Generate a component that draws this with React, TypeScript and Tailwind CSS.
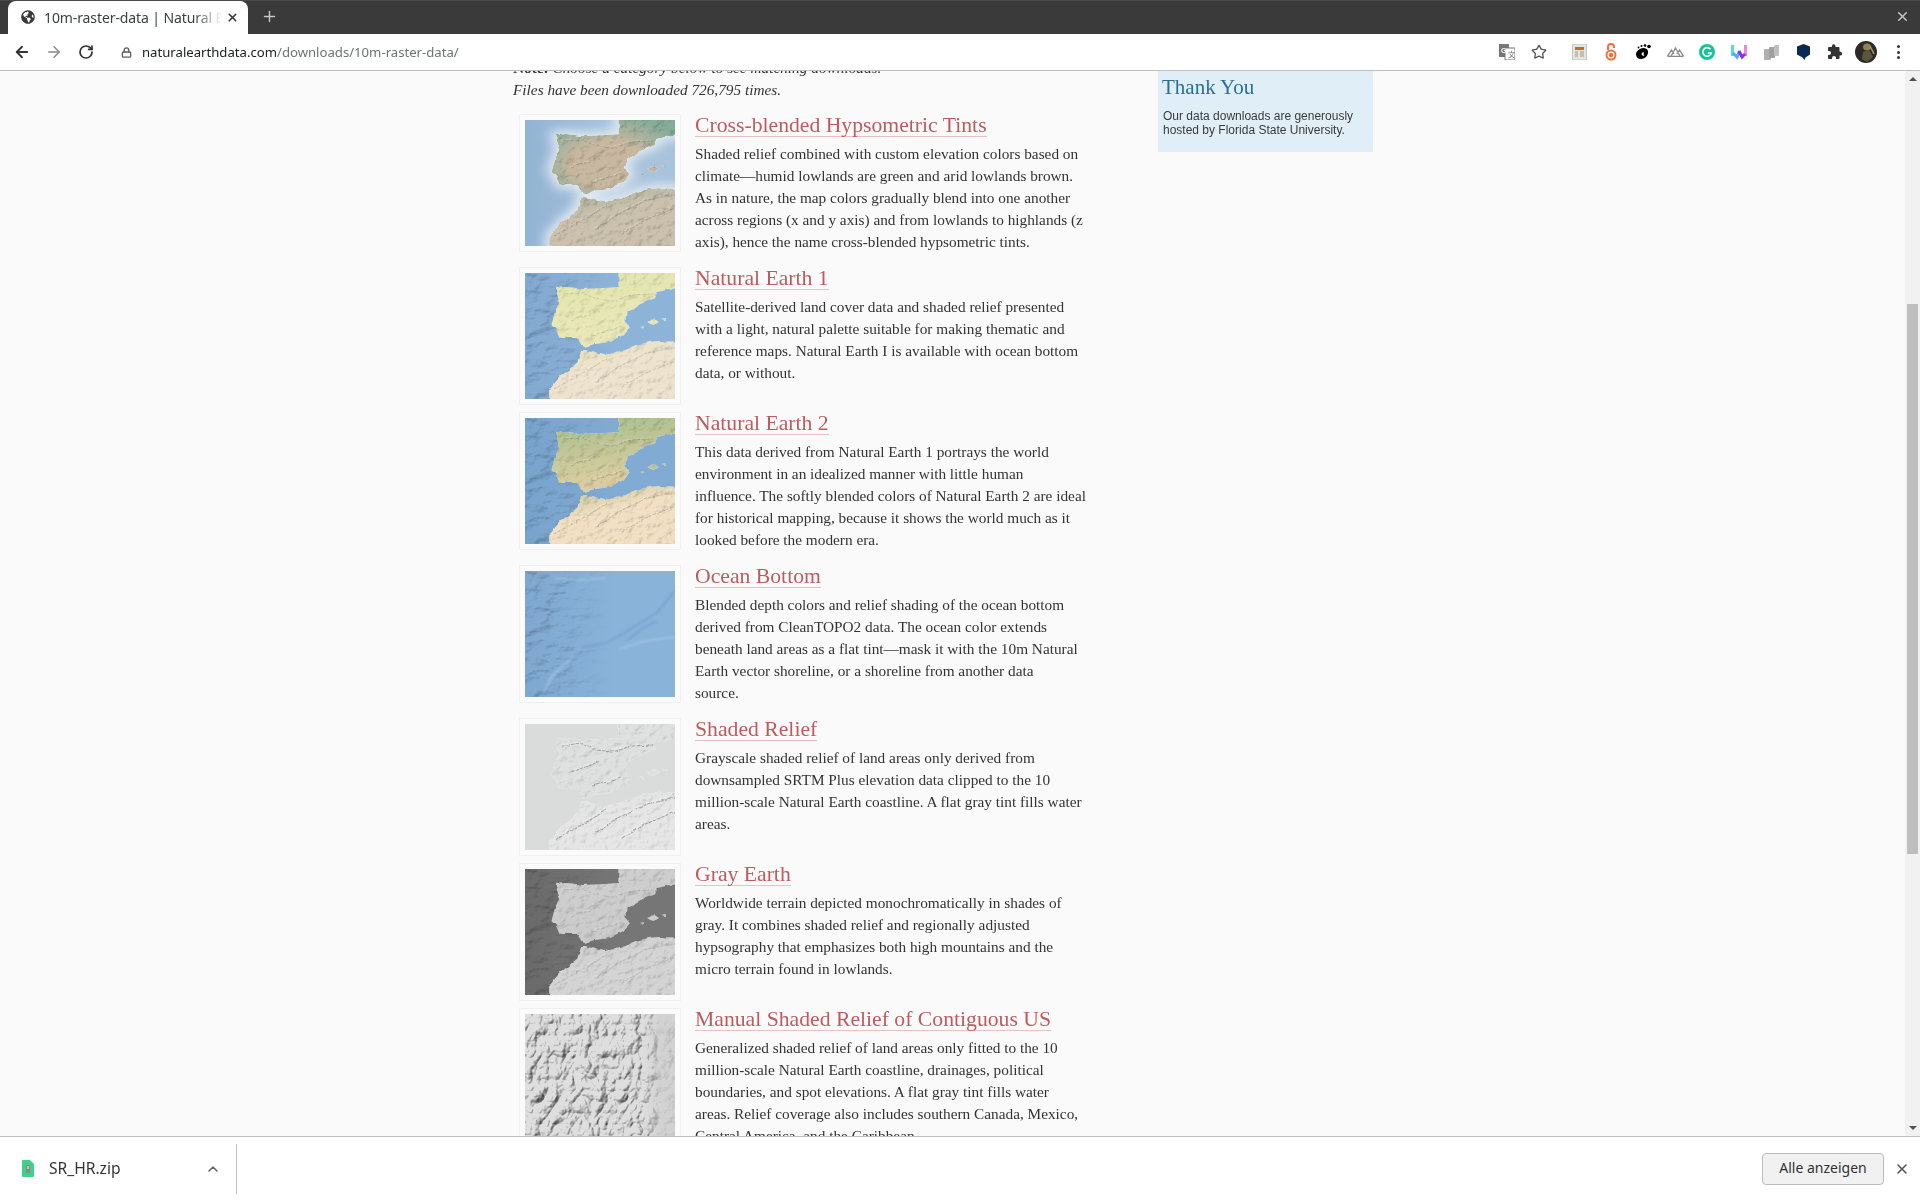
import { ArrowLeft, ArrowRight, ChevronUp, Lock, Plus, RotateCw, Star, X } from "lucide-react";
import { FaGlobeAmericas } from "react-icons/fa";

interface MapStyle {
  id: string;
  ocean: [string, string];
  iberia: [string, string];
  africa: [string, string];
  glow?: string;
  hideLand?: boolean;
  radial?: boolean;
  freq: number;
  scale: number;
  oceanRelief?: boolean;
  ridges: number;
}

const IBERIA =
  "M81 -5 L81 14 L70 15 L50 16 L36 14 L26 15 L30 29 L26 39 L23 52 L27 57 L30 65 L46 65 L51 74 L60 71 L74 69 L85 62 L91 54 L87 47 L88 39 L100 31 L113 25 L113 19 L122 17 L135 13 L135 -5 Z";
const AFRICA =
  "M49 77 L52 77 L60 80 L69 82 L82 79 L97 72 L107 69 L117 68 L135 69 L135 131 L21 131 L21 117 L30 104 L45 90 Z";
const ISLANDS = "M106 49 L112 46 L116 49 L110 52 Z M99 54 L102 53 L102 56 Z M118 46 L122 45 L122 47 Z";

const RIDGES = [
  "M32 22 L48 19 L62 26 L76 28 L92 22 L110 21",
  "M40 48 L52 43 L66 37",
  "M58 62 L72 58 L84 54",
  "M26 116 L46 103 L62 92 L70 86",
  "M62 108 L84 92 L106 80 L130 74",
  "M84 114 L104 100 L130 88",
];

const MAPS: Record<string, MapStyle> = {
  hypso: { id: "hypso", ocean: ["#92b3d4", "#a9c3dc"], iberia: ["#c9b8a0", "#84ad9a"], africa: ["#a3b096", "#cbc1ae"], glow: "#dfe9f2", radial: true, freq: 0.12, scale: 0.9, ridges: 0.22 },
  ne1: { id: "ne1", ocean: ["#82a9d1", "#8db3d8"], iberia: ["#e2e6ae", "#ebe8ba"], africa: ["#e6e5b4", "#eee3cf"], freq: 0.12, scale: 0.7, oceanRelief: true, ridges: 0.16 },
  ne2: { id: "ne2", ocean: ["#78a3cd", "#82abd3"], iberia: ["#a8c08c", "#e0cfa4"], africa: ["#bfc392", "#f2e0c4"], freq: 0.12, scale: 0.8, oceanRelief: true, ridges: 0.22 },
  bottom: { id: "bottom", ocean: ["#7fa8d1", "#8ab3da"], iberia: ["#8ab3da", "#8ab3da"], africa: ["#8ab3da", "#8ab3da"], hideLand: true, freq: 0.08, scale: 0.8, oceanRelief: true, ridges: 0 },
  relief: { id: "relief", ocean: ["#dadcdb", "#dadcdb"], iberia: ["#dfe1e0", "#dfe1e0"], africa: ["#dfe1e0", "#e5e6e5"], freq: 0.14, scale: 0.55, ridges: 0.38 },
  gray: { id: "gray", ocean: ["#6a6a6a", "#767676"], iberia: ["#cfcfcf", "#cbcbcb"], africa: ["#cdcdcd", "#d4d4d4"], freq: 0.12, scale: 0.8, oceanRelief: true, ridges: 0.16 },
};

function Thumb({ style }: { style: MapStyle }) {
  const s = style;
  return (
    <svg viewBox="0 0 130 126" preserveAspectRatio="none" className="block w-[150px] h-[126px]">
      <defs>
        <linearGradient id={s.id + "-o"} x1="0" x2="1" y1="0" y2="0">
          <stop offset="0" stopColor={s.ocean[0]} />
          <stop offset="0.6" stopColor={s.ocean[1]} />
        </linearGradient>
        {s.radial ? (
          <radialGradient id={s.id + "-l"} cx="0.45" cy="0.62" r="0.62">
            <stop offset="0.45" stopColor={s.iberia[0]} />
            <stop offset="1" stopColor={s.iberia[1]} />
          </radialGradient>
        ) : (
          <linearGradient id={s.id + "-l"} x1="0" x2="0.2" y1="0.1" y2="1">
            <stop offset="0" stopColor={s.iberia[0]} />
            <stop offset="1" stopColor={s.iberia[1]} />
          </linearGradient>
        )}
        <linearGradient id={s.id + "-a"} x1="0" x2="0.5" y1="0" y2="1">
          <stop offset="0" stopColor={s.africa[0]} />
          <stop offset="0.5" stopColor={s.africa[1]} />
        </linearGradient>
        <linearGradient id={s.id + "-m"} x1="0" x2="1" y1="0" y2="0">
          <stop offset="0.15" stopColor="#fff" />
          <stop offset="0.55" stopColor="#000" />
        </linearGradient>
        <mask id={s.id + "-k"} maskUnits="userSpaceOnUse" x="0" y="0" width="130" height="126">
          <rect width="130" height="126" fill={`url(#${s.id}-m)`} />
        </mask>
        <filter id={s.id + "-f"} x="0" y="0" width="100%" height="100%" colorInterpolationFilters="sRGB">
          <feTurbulence type="fractalNoise" baseFrequency="0.05 0.09" numOctaves={4} seed={7} />
          <feDiffuseLighting surfaceScale={1.6} diffuseConstant={1.16} lightingColor="#ffffff">
            <feDistantLight azimuth={225} elevation={60} />
          </feDiffuseLighting>
        </filter>
        <filter id={s.id + "-land"} filterUnits="userSpaceOnUse" x="-10" y="-10" width="150" height="146" colorInterpolationFilters="sRGB">
          <feTurbulence type="fractalNoise" baseFrequency={s.freq} numOctaves={4} seed={7} result="t" />
          <feDisplacementMap in="SourceGraphic" in2="t" scale="3.5" xChannelSelector="R" yChannelSelector="G" result="d" />
          <feDiffuseLighting in="t" surfaceScale={s.scale} diffuseConstant={1.16} lightingColor="#ffffff" result="l">
            <feDistantLight azimuth={225} elevation={60} />
          </feDiffuseLighting>
          <feBlend in="d" in2="l" mode="multiply" result="m" />
          <feComposite in="m" in2="d" operator="in" />
        </filter>
        <filter id={s.id + "-b"} x="-20%" y="-20%" width="140%" height="140%">
          <feGaussianBlur stdDeviation="5" />
        </filter>
        <filter id={s.id + "-s"} x="-20%" y="-20%" width="140%" height="140%">
          <feGaussianBlur stdDeviation="1" />
        </filter>
      </defs>
      <rect width="130" height="126" fill={`url(#${s.id}-o)`} />
      {s.oceanRelief ? (
        <g className="mix-blend-multiply" mask={`url(#${s.id}-k)`}>
          <rect width="130" height="126" filter={`url(#${s.id}-f)`} />
        </g>
      ) : null}
      {s.glow ? (
        <g filter={`url(#${s.id}-b)`} fill={s.glow} stroke={s.glow} strokeWidth="8">
          <path d={IBERIA} />
          <path d={AFRICA} />
        </g>
      ) : null}
      {s.hideLand ? (
        <g filter={`url(#${s.id}-s)`} fill="none">
          <g stroke="#a9c9e6" strokeWidth="1.6" opacity="0.8">
            <path d="M26 8 L50 9 L70 7" />
            <path d="M82 78 L104 70 L130 66" />
            <path d="M16 122 L24 104 L42 86" />
          </g>
          <g stroke="#6f9ac6" strokeWidth="1.6" opacity="0.7">
            <path d="M50 76 L70 72 L86 62 L100 52 L114 42 L130 20" />
            <path d="M88 70 L104 56 L114 50" />
          </g>
        </g>
      ) : (
        <g filter={`url(#${s.id}-land)`}>
          <path d={IBERIA} fill={`url(#${s.id}-l)`} />
          <path d={AFRICA} fill={`url(#${s.id}-a)`} />
          <path d={ISLANDS} fill={`url(#${s.id}-l)`} />
          <g fill="none" strokeWidth="1.1" strokeDasharray="3 1">
            {RIDGES.map((d) => (
              <g key={d}>
                <path d={d} stroke="#3f3f3f" opacity={s.ridges} />
                <path d={d} stroke="#ffffff" opacity={s.ridges} transform="translate(-1,-1)" />
              </g>
            ))}
          </g>
        </g>
      )}
    </svg>
  );
}

function ManualRelief() {
  return (
    <svg viewBox="0 0 150 126" className="block w-[150px] h-[126px]">
      <defs>
        <filter id="manual-f" x="0" y="0" width="100%" height="100%" colorInterpolationFilters="sRGB">
          <feTurbulence type="turbulence" baseFrequency="0.06 0.045" numOctaves={4} seed={12} />
          <feDiffuseLighting surfaceScale={3.4} diffuseConstant={1.2} lightingColor="#ffffff">
            <feDistantLight azimuth={225} elevation={58} />
          </feDiffuseLighting>
        </filter>
        <linearGradient id="manual-g" x1="0" x2="1" y1="0" y2="0">
          <stop offset="0.78" stopColor="#cfcfcf" stopOpacity="0" />
          <stop offset="0.9" stopColor="#cfcfcf" stopOpacity="0.8" />
        </linearGradient>
      </defs>
      <rect width="150" height="126" fill="#dedede" />
      <g className="mix-blend-multiply">
        <rect width="150" height="126" filter="url(#manual-f)" />
      </g>
      <rect width="150" height="126" fill="url(#manual-g)" />
    </svg>
  );
}

const ROWS = [
  { map: "hypso", title: "Cross-blended Hypsometric Tints", lines: ["Shaded relief combined with custom elevation colors based on", "climate—humid lowlands are green and arid lowlands brown.", "As in nature, the map colors gradually blend into one another", "across regions (x and y axis) and from lowlands to highlands (z", "axis), hence the name cross-blended hypsometric tints."] },
  { map: "ne1", title: "Natural Earth 1", lines: ["Satellite-derived land cover data and shaded relief presented", "with a light, natural palette suitable for making thematic and", "reference maps. Natural Earth I is available with ocean bottom", "data, or without."] },
  { map: "ne2", title: "Natural Earth 2", lines: ["This data derived from Natural Earth 1 portrays the world", "environment in an idealized manner with little human", "influence. The softly blended colors of Natural Earth 2 are ideal", "for historical mapping, because it shows the world much as it", "looked before the modern era."] },
  { map: "bottom", title: "Ocean Bottom", lines: ["Blended depth colors and relief shading of the ocean bottom", "derived from CleanTOPO2 data. The ocean color extends", "beneath land areas as a flat tint—mask it with the 10m Natural", "Earth vector shoreline, or a shoreline from another data", "source."] },
  { map: "relief", title: "Shaded Relief", lines: ["Grayscale shaded relief of land areas only derived from", "downsampled SRTM Plus elevation data clipped to the 10", "million-scale Natural Earth coastline. A flat gray tint fills water", "areas."] },
  { map: "gray", title: "Gray Earth", lines: ["Worldwide terrain depicted monochromatically in shades of", "gray. It combines shaded relief and regionally adjusted", "hypsography that emphasizes both high mountains and the", "micro terrain found in lowlands."] },
  { map: "manual", title: "Manual Shaded Relief of Contiguous US", lines: ["Generalized shaded relief of land areas only fitted to the 10", "million-scale Natural Earth coastline, drainages, political", "boundaries, and spot elevations. A flat gray tint fills water", "areas. Relief coverage also includes southern Canada, Mexico,", "Central America, and the Caribbean."] },
];

function TabBar() {
  return (
    <div className="h-[34px] bg-[#3a3a3a] flex items-end pl-2 shrink-0 border-t border-[#4a4a4a]">
      <div className="relative w-[240px] h-[33px] bg-white rounded-t-[8px] flex items-center pl-[13px] pr-[9px] pb-[1px] text-[#3c4043]">
        <FaGlobeAmericas className="w-[14px] h-[14px] text-[#3a3a3a] shrink-0" />
        <span className="ml-[9px] flex-1 overflow-hidden whitespace-nowrap text-[14px] font-['Noto_Sans',sans-serif] tracking-[-0.1px]">
          10m-raster-data | Natural Earth
        </span>
        <div className="absolute right-[26px] top-0 w-[28px] h-full bg-gradient-to-r from-transparent to-white" />
        <X size={13} strokeWidth={3} className="relative ml-1 text-[#3a3a3a] shrink-0" />
      </div>
      <Plus size={17} strokeWidth={2} className="ml-[13px] mb-[9px] text-[#c8c8c8]" />
      <X size={15} strokeWidth={2.6} className="ml-auto mr-[10px] mb-[10px] text-[#c0c0c0]" />
    </div>
  );
}

function ExtensionIcons() {
  return (
    <div className="ml-auto mr-[5px] flex items-center">
      <div className="w-[32px] flex justify-center">
        <svg width="16" height="16" viewBox="0 0 16 16">
          <rect x="0" y="0" width="10" height="13" fill="#777" />
          <rect x="6" y="4" width="10" height="12" fill="#fff" stroke="#777" />
          <text x="2" y="9" fontSize="7" fontWeight="700" fill="#fff" fontFamily="Liberation Sans">G</text>
          <text x="9" y="13" fontSize="7" fill="#666" fontFamily="Noto Sans CJK SC">文</text>
        </svg>
      </div>
      <div className="w-[40px] flex justify-center pr-2">
        <Star size={16} strokeWidth={2} className="text-[#555]" />
      </div>
      <div className="w-[32px] flex justify-center">
        <svg width="15" height="16" viewBox="0 0 15 16">
          <rect x="0.5" y="0" width="14" height="16" fill="#e4e4e0" stroke="#c4c4c0" />
          <rect x="3" y="3" width="9" height="3" fill="#b8741e" />
          <path d="M3 8h3M3 10h3M3 12h3M8 8h4M8 10h4M8 12h4" stroke="#999" />
        </svg>
      </div>
      <div className="w-[32px] flex justify-center">
        <svg width="12" height="18" viewBox="0 0 12 18" fill="none" stroke="#f0703c" strokeWidth="2">
          <path d="M3 7V4a3 3 0 0 1 6 0v1" />
          <circle cx="6" cy="12" r="4.5" />
          <circle cx="6" cy="12" r="1.2" fill="#f0703c" />
        </svg>
      </div>
      <div className="w-[32px] flex justify-center">
        <svg width="16" height="16" viewBox="0 0 16 16" fill="#000">
          <path d="M13 7c.6 4-2.5 8-7 8-3 0-5-2-5-4.5C1 7 5 4 8.5 4 10.5 4 12.5 5 13 7zM9 8.5a2 2 0 0 0-2.5 1.5 2 2 0 0 0 3 1.5l-1-1z" fillRule="evenodd" />
          <circle cx="14" cy="2.5" r="1.8" />
          <circle cx="10" cy="1.5" r="1.3" />
          <circle cx="6.5" cy="2" r="1" />
          <circle cx="3.5" cy="3.5" r="0.9" />
        </svg>
      </div>
      <div className="w-[32px] flex justify-center">
        <svg width="17" height="10" viewBox="0 0 17 10" fill="none" stroke="#8a8a8a" strokeWidth="1.3">
          <path d="M0.5 9.3 L4.5 3 L7 7 M4 9.3 L8.5 1 L13 9.3 M10 7 L12.5 3 L16.5 9.3 M0.5 9.3 H16.5" />
        </svg>
      </div>
      <div className="w-[32px] flex justify-center">
        <svg width="16" height="16" viewBox="0 0 16 16">
          <circle cx="8" cy="8" r="8" fill="#15c39a" />
          <path d="M11.5 5.3 A4.3 4.3 0 1 0 12.3 9 H8.8" fill="none" stroke="#fff" strokeWidth="1.6" />
        </svg>
      </div>
      <div className="w-[32px] flex justify-center">
        <svg width="16" height="16" viewBox="0 0 16 16" fill="none" strokeWidth="3">
          <path d="M1.5 1V12" stroke="#4fe0d0" />
          <path d="M14.5 1V12" stroke="#e88ad8" />
          <path d="M2 9L6 13L8.5 7" stroke="#55a8f0" />
          <path d="M8 7L11 13L14 10" stroke="#8a2cf0" />
        </svg>
      </div>
      <div className="w-[32px] flex justify-center">
        <svg width="15" height="15" viewBox="0 0 15 15" fill="#b0b0b0">
          <rect x="0" y="4" width="7" height="11" rx="1" />
          <rect x="5" y="2" width="6" height="11" rx="1" fill="#a0a0a0" />
          <rect x="10" y="0" width="5" height="11" rx="1" fill="#c0c0c0" />
        </svg>
      </div>
      <div className="w-[32px] flex justify-center">
        <svg width="13" height="16" viewBox="0 0 13 16" fill="#0b2a52">
          <path d="M6.5 0L13 2.5V10.5L8.5 13.5L7.5 16L5.5 13.5L0 10.5V2.5Z" />
        </svg>
      </div>
      <div className="w-[32px] flex justify-center">
        <svg width="16" height="16" viewBox="0 0 16 16" fill="#333">
          <path d="M13.5 7.5H12.5V4a1 1 0 0 0-1-1H8.5V2a1.8 1.8 0 0 0-3.6 0V3H2a1 1 0 0 0-1 1v3h1a2 2 0 0 1 0 4H1v3a1 1 0 0 0 1 1h3v-1a2 2 0 0 1 4 0v1h2.5a1 1 0 0 0 1-1v-2.5h1a1.75 1.75 0 0 0 0-3.5z" />
        </svg>
      </div>
      <div className="w-[30px] flex justify-center">
        <svg width="22" height="22" viewBox="0 0 22 22">
          <circle cx="11" cy="11" r="11" fill="#2e2a26" />
          <ellipse cx="12" cy="6" rx="4" ry="3.5" fill="#8f8256" />
          <path d="M8 11L14 9L18 16L12 21L7 18Z" fill="#5a5640" />
          <path d="M15 5L19 13" stroke="#a09a70" strokeWidth="1.5" />
        </svg>
      </div>
      <div className="w-[34px] flex flex-col items-center gap-[2.5px]">
        <span className="w-[3px] h-[3px] rounded-full bg-[#333]" />
        <span className="w-[3px] h-[3px] rounded-full bg-[#333]" />
        <span className="w-[3px] h-[3px] rounded-full bg-[#333]" />
      </div>
    </div>
  );
}

function Toolbar() {
  return (
    <div className="h-[37px] bg-white border-b border-[#bdbdbd] flex items-center pl-[13px] shrink-0">
      <ArrowLeft size={18} strokeWidth={2.4} className="text-[#333]" />
      <ArrowRight size={18} strokeWidth={2} className="ml-[14px] text-[#8c8c8c]" />
      <RotateCw size={16} strokeWidth={2.6} className="ml-[15px] text-[#333]" />
      <Lock size={11} strokeWidth={3} className="ml-[27px] text-[#5f5f5f]" />
      <div className="ml-[10px] pt-[1px] text-[13.15px] font-['Noto_Sans',sans-serif] text-[#202124] whitespace-nowrap">
        naturalearthdata.com<span className="text-[#6f7276]">/downloads/10m-raster-data/</span>
      </div>
      <ExtensionIcons />
    </div>
  );
}

function Scrollbar() {
  return (
    <div className="w-[15px] bg-[#f1f1f1] flex flex-col items-center shrink-0">
      <div className="mt-[6px] w-0 h-0 border-x-[4px] border-x-transparent border-b-[4px] border-b-[#505050]" />
      <div className="mt-[223px] w-[11px] h-[550px] bg-[#bebebe]" />
      <div className="mt-auto mb-[6px] w-0 h-0 border-x-[4px] border-x-transparent border-t-[4px] border-t-[#505050]" />
    </div>
  );
}

function Sidebar() {
  return (
    <div className="w-[215px] h-[81px] bg-[#e0eff7] pl-[4px] shrink-0">
      <h3 className="text-[21px] leading-[28px] pt-[2px] h-[38px] text-[#2b6f96] font-['Liberation_Serif',serif]">Thank You</h3>
      <p className="pl-[1px] text-[12px] leading-[14px] text-[#3a3a3a] font-['Liberation_Sans',sans-serif] whitespace-nowrap">
        Our data downloads are generously
        <br />
        hosted by Florida State University.
      </p>
    </div>
  );
}

function Content() {
  return (
    <div className="flex-1 overflow-hidden flex pl-[513px] bg-[#fafafa]">
      <div className="w-[645px] shrink-0 -mt-[14px] font-['Liberation_Serif',serif] text-[#333]">
        <p className="text-[15.3px] leading-[22px] italic mb-[13px]">
          <b className="not-italic">Note:</b> Choose a category below to see matching downloads.
          <br />
          Files have been downloaded 726,795 times.
        </p>
        {ROWS.map((row) => (
          <div key={row.title} className="flex ml-[6px] mb-[7px]">
            <div className="w-[162px] h-[138px] shrink-0 border border-[#f0f0f0] bg-[#fbfbfb] pl-[5px] pt-[5px] overflow-hidden">
              {row.map === "manual" ? <ManualRelief /> : <Thumb style={MAPS[row.map]} />}
            </div>
            <div className="ml-[14px] pb-[7px]">
              <h2 className="block w-fit h-[23px] text-[21.7px] leading-[22px] text-[#bd5b5e] border-b border-[#e8c2c3] whitespace-nowrap">
                {row.title}
              </h2>
              <p className="mt-[6px] text-[15.3px] leading-[22px] text-[#333] whitespace-nowrap">
                {row.lines.map((line) => (
                  <span key={line} className="block">
                    {line}
                  </span>
                ))}
              </p>
            </div>
          </div>
        ))}
      </div>
      <Sidebar />
    </div>
  );
}

function DownloadBar() {
  return (
    <div className="h-[64px] bg-white border-t border-[#bdbdbd] flex items-center shrink-0 font-['Noto_Sans',sans-serif]">
      <svg width="12" height="17" viewBox="0 0 12 17" className="ml-[22px]">
        <path d="M0 1a1 1 0 0 1 1-1h7l4 4v12a1 1 0 0 1-1 1H1a1 1 0 0 1-1-1Z" fill="#3fd08a" />
        <rect x="4" y="5" width="4" height="8" fill="#8a8a8a" />
        <rect x="5.5" y="6" width="1" height="3" fill="#fff" />
      </svg>
      <span className="ml-[15px] w-[72px] text-[15.6px] text-[#333] whitespace-nowrap">SR_HR.zip</span>
      <ChevronUp size={16} strokeWidth={2.4} className="ml-[84px] text-[#666]" />
      <div className="ml-[15px] w-px h-[50px] bg-[#bdbdbd]" />
      <button className="ml-auto w-[122px] h-[32px] pb-[2px] bg-[#f1f1f1] border border-[#bbbbbb] rounded-[4px] text-[14px] text-[#333]">
        Alle anzeigen
      </button>
      <X size={16} strokeWidth={2.4} className="ml-[10px] mr-[10px] text-[#555]" />
    </div>
  );
}

export default function App() {
  return (
    <div className="w-full h-screen flex flex-col overflow-hidden bg-white">
      <TabBar />
      <Toolbar />
      <div className="flex-1 min-h-0 flex">
        <Content />
        <Scrollbar />
      </div>
      <DownloadBar />
    </div>
  );
}
